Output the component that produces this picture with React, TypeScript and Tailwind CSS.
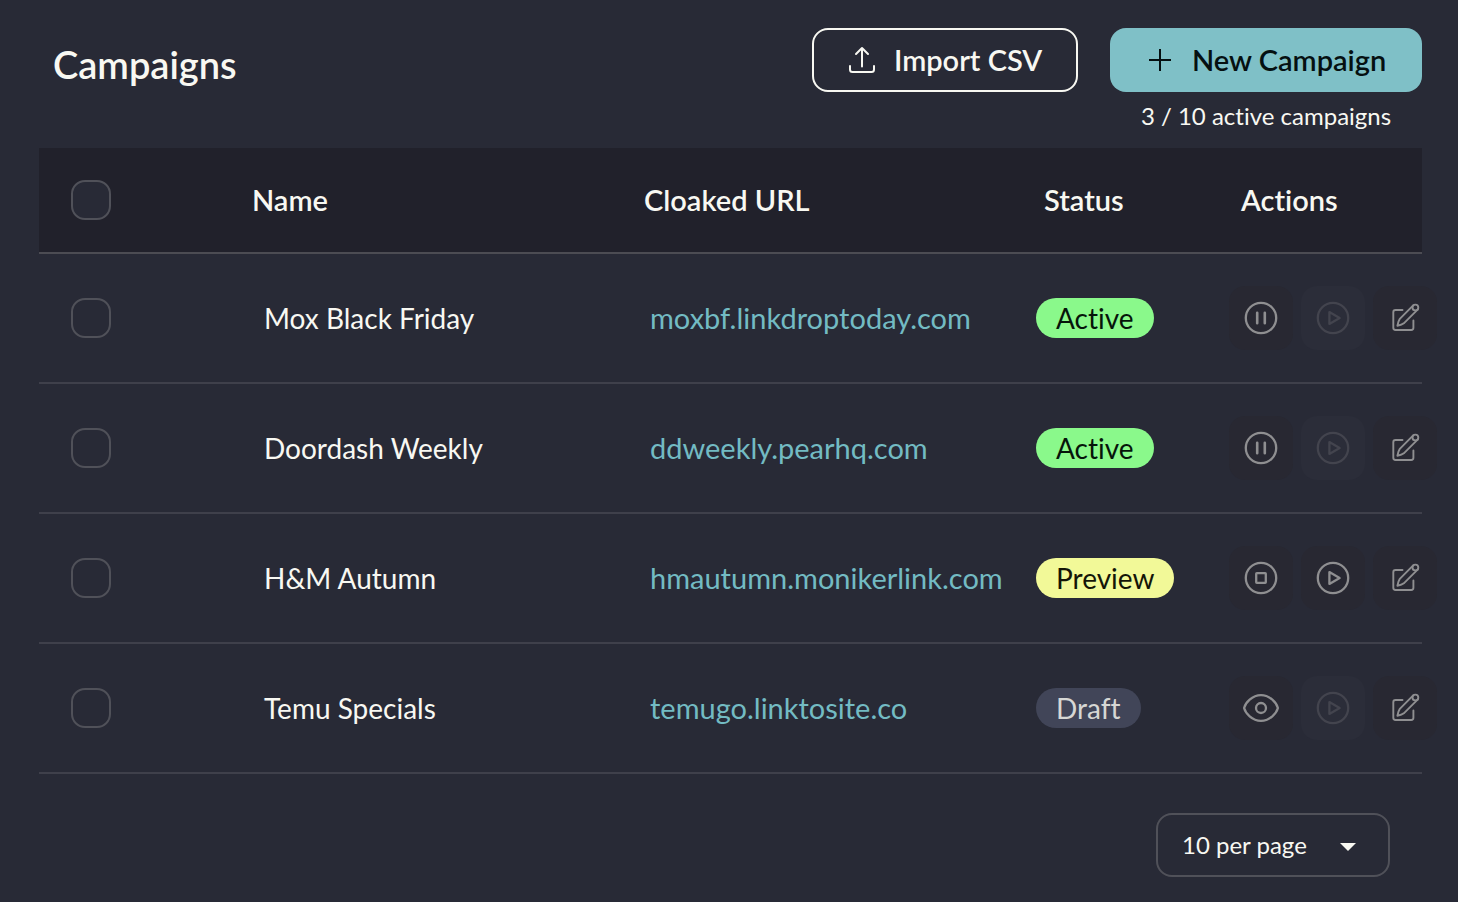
import React from 'react';

type IconName = 'pause' | 'stop' | 'play' | 'eye' | 'edit';

const campaigns = [
  { name: 'Mox Black Friday', url: 'moxbf.linkdroptoday.com', status: 'Active', icon: 'pause', canPlay: false },
  { name: 'Doordash Weekly', url: 'ddweekly.pearhq.com', status: 'Active', icon: 'pause', canPlay: false },
  { name: 'H&M Autumn', url: 'hmautumn.monikerlink.com', status: 'Preview', icon: 'stop', canPlay: true },
  { name: 'Temu Specials', url: 'temugo.linktosite.co', status: 'Draft', icon: 'eye', canPlay: false },
] as const;

const badgeStyles = {
  Active: 'bg-[#8af98b] text-[#06150a]',
  Preview: 'bg-[#f2f998] text-[#141507]',
  Draft: 'bg-[#414558] text-[#d6d7d4]',
};

const actionLabels: Record<IconName, string> = {
  pause: 'Pause',
  stop: 'Stop',
  play: 'Start',
  eye: 'Preview',
  edit: 'Edit',
};

const ActionIcon = ({ name }: { name: IconName }) => (
  <svg
    viewBox="-20 -20 40 40"
    className="size-10 shrink-0"
    fill="none"
    stroke="currentColor"
    strokeWidth="2.3"
    strokeLinecap="round"
    strokeLinejoin="round"
    aria-hidden="true"
  >
    {(name === 'pause' || name === 'stop' || name === 'play') && <circle r="15.2" />}
    {name === 'pause' && <path d="M-3.8-5.2V5.2M3.8-5.2V5.2" strokeWidth="2.6" />}
    {name === 'stop' && <rect x="-4.8" y="-4.8" width="9.6" height="9.6" rx="0.6" />}
    {name === 'play' && <path d="M-3.6-5.9V5.9L6.6 0Z" />}
    {name === 'eye' && (
      <>
        <path d="M-16.9 0C-15.6-5-9-12.8 0-12.8S15.6-5 16.9 0C15.6 5 9 12.8 0 12.8S-15.6 5-16.9 0Z" />
        <circle r="5" />
      </>
    )}
    {name === 'edit' && (
      <g strokeWidth="1.9">
        <path d="M-2.5-8H-9.5Q-11.7-8-11.7-5.8V9.8Q-11.7 12-9.5 12H6.2Q8.4 12 8.4 9.8V2.5" />
        <path d="M8.2-12.6L-5.2 0.8Q-6.6 2.6-7.6 7.8Q-3 6.9-1.2 5.3L12.6-8.4" />
        <circle cx="10.4" cy="-10.5" r="2.9" />
      </g>
    )}
  </svg>
);

const ActionButton = ({ name, disabled = false }: { name: IconName; disabled?: boolean }) => (
  <button
    type="button"
    aria-label={actionLabels[name]}
    disabled={disabled}
    className={`flex size-16 shrink-0 items-center justify-center rounded-2xl ${
      disabled ? 'bg-[#2b2d39] text-[#43444e]' : 'bg-[#282832] text-[#8f8f91]'
    }`}
  >
    <ActionIcon name={name} />
  </button>
);

const Checkbox = ({ label }: { label: string }) => (
  <input
    type="checkbox"
    aria-label={label}
    className="block size-10 appearance-none rounded-[14px] border-2 border-[#505159] bg-[#282a36] checked:bg-[#7fc0c7]"
  />
);

const App = () => {
  return (
    <main className="min-h-screen bg-[#282a36] pt-7 pr-9 pb-6 pl-[39px] font-['Lato',sans-serif] text-[28px] leading-10 text-[#f8f8f2] [font-variant-ligatures:none]">
      <header className="flex h-[120px] items-start justify-between">
        <h1 className="pt-4 pl-3.5 text-[38px] font-semibold">Campaigns</h1>
        <div className="flex items-start gap-8">
          <button
            type="button"
            className="flex h-16 w-[266px] items-center rounded-2xl border-2 border-[#f8f8f2] pl-8 text-[29px] font-semibold"
          >
            <svg viewBox="-16 -16 32 32" className="mr-4 size-8" fill="none" stroke="currentColor" strokeWidth="2" strokeLinecap="round" strokeLinejoin="round" aria-hidden="true">
              <path d="M0 6.5V-12M-6-6L0-12L6-6M-12 6V9.5Q-12 12-9.5 12H9.5Q12 12 12 9.5V6" />
            </svg>
            Import CSV
          </button>
          <div>
            <button
              type="button"
              className="flex h-16 w-[312px] items-center rounded-2xl bg-[#7fc0c7] pl-[34px] text-[29px] font-semibold text-[#051011]"
            >
              <svg viewBox="-16 -16 32 32" className="mr-4 size-8" fill="none" stroke="currentColor" strokeWidth="2" aria-hidden="true">
                <path d="M-11 0H11M0-11V11" />
              </svg>
              New Campaign
            </button>
            <p className="mt-1 text-center text-2xl leading-10">3 / 10 active campaigns</p>
          </div>
        </div>
      </header>

      <table className="w-full table-fixed border-collapse text-left">
        <thead>
          <tr className="h-[105px] border-b-2 border-[#4c4c53] bg-[#21212b] text-[29px]">
            <th className="w-[181px] pl-8">
              <Checkbox label="Select all campaigns" />
            </th>
            <th className="pl-8 font-semibold">Name</th>
            <th className="pl-8 font-semibold">Cloaked URL</th>
            <th className="w-[193px] pl-10 font-semibold">Status</th>
            <th className="w-[225px] pl-11 font-semibold">Actions</th>
          </tr>
        </thead>
        <tbody>
          {campaigns.map((campaign) => (
            <tr key={campaign.name} className="h-[130px] border-b-2 border-[#3f404b]">
              <td className="pl-8">
                <Checkbox label={`Select ${campaign.name}`} />
              </td>
              <td className="pl-11">{campaign.name}</td>
              <td className="pl-[38px] text-[29px] whitespace-nowrap">
                <a href="#" className="text-[#73bbc3]">
                  {campaign.url}
                </a>
              </td>
              <td className="pl-8">
                <span className={`block w-fit rounded-full px-5 ${badgeStyles[campaign.status]}`}>
                  {campaign.status}
                </span>
              </td>
              <td className="pl-8">
                <div className="flex gap-2">
                  <ActionButton name={campaign.icon} />
                  <ActionButton name="play" disabled={!campaign.canPlay} />
                  <ActionButton name="edit" />
                </div>
              </td>
            </tr>
          ))}
        </tbody>
      </table>

      {/* Pagination */}
      <div className="mt-[39px] flex justify-end pr-8">
        <div className="relative">
          <select
            aria-label="Campaigns per page"
            className="block h-16 w-[234px] appearance-none rounded-2xl border-2 border-[#505159] bg-[#282a36] pl-6 text-2xl"
          >
            <option>10 per page</option>
            <option>25 per page</option>
            <option>50 per page</option>
          </select>
          <svg viewBox="0 0 16 8" className="pointer-events-none absolute top-[30px] right-[34px] h-2 w-4" fill="currentColor" aria-hidden="true">
            <path d="M0 0H16L8 8Z" />
          </svg>
        </div>
      </div>
    </main>
  );
};

export default App;
